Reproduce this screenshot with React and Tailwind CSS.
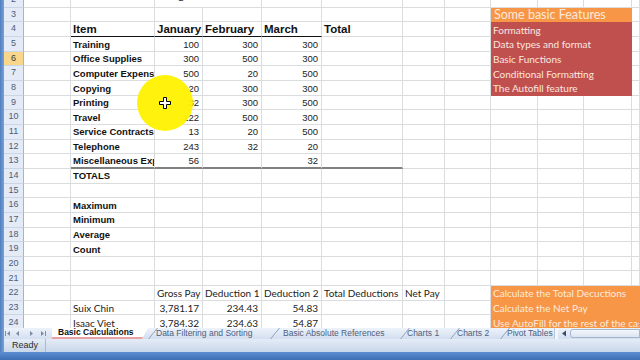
import React from 'react';

// column template: row header, then A..L
const COLS = 'grid grid-cols-[20px_47px_84px_48px_59px_60px_81px_42px_46px_47px_46px_48px_1fr] h-[14.67px]';
const SPAN = { 1: '', 2: 'col-span-2', 3: 'col-span-3', 4: 'col-span-4' };

const KIND = {
  item: 'font-bold text-[9.5px] pl-[2px] text-[#111]',
  head: 'font-bold text-[11.5px] pl-[2px] text-[#111]',
  num: 'justify-end text-[9.5px] pr-[3px] text-[#222]',
  cal: '[font-family:Lato,sans-serif] text-[10px] pl-[2px] text-[#222]',
  calnum: '[font-family:Lato,sans-serif] justify-end text-[10px] pr-[3px] text-[#222]',
  title: '[font-family:Lato,sans-serif] text-[11px] pl-[2px] text-[#222] !items-start',
  featHead: '[font-family:Lato,sans-serif] text-[12.5px] pl-[3px] bg-[#f79646] text-[#fde9d9]',
  feat: '[font-family:Lato,sans-serif] text-[10px] pl-[2px] bg-[#c0504d] text-[#fbe6e0]',
  task: '[font-family:Lato,sans-serif] text-[10px] pl-[2px] bg-[#f79646] text-[#fdeadb]',
};

const FILL_BORDER = {
  featHead: 'border-r-[#f79646] border-b-[#f79646]',
  feat: 'border-r-[#c0504d] border-b-[#c0504d]',
  task: 'border-r-[#f79646] border-b-[#f79646]',
};

const it = (t) => ({ t, kind: 'item' });
const n = (t) => ({ t, kind: 'num' });
const feat = (t) => ({ t, kind: 'feat', span: 3 });
const task = (t) => ({ t, kind: 'task', span: 4 });

// each row: [rowNumber, cells keyed by column index (0 = A)]
const rows = [
  [2, { 2: { t: 'Using Excel', kind: 'title', span: 2 } }],
  [3, { 8: { t: 'Some basic Features', kind: 'featHead', span: 3 } }],
  [4, {
    1: { t: 'Item', kind: 'head', bb: 'black' },
    2: { t: 'January', kind: 'head', bb: 'black' },
    3: { t: 'February', kind: 'head', bb: 'black' },
    4: { t: 'March', kind: 'head', bb: 'black' },
    5: { t: 'Total', kind: 'head' },
    8: feat('Formatting'),
  }],
  [5, { 1: it('Training'), 2: n(100), 3: n(300), 4: n(300), 8: feat('Data types and format') }],
  [6, { 1: it('Office Supplies'), 2: n(300), 3: n(500), 4: n(300), 8: feat('Basic Functions') }],
  [7, { 1: it('Computer Expenses'), 2: n(500), 3: n(20), 4: n(500), 8: feat('Conditional Formatting') }],
  [8, { 1: it('Copying'), 2: n(20), 3: n(300), 4: n(300), 8: feat('The Autofill feature') }],
  [9, { 1: it('Printing'), 2: n(32), 3: n(300), 4: n(500) }],
  [10, { 1: it('Travel'), 2: n(122), 3: n(500), 4: n(300) }],
  [11, { 1: it('Service Contracts'), 2: n(13), 3: n(20), 4: n(500) }],
  [12, { 1: it('Telephone'), 2: n(243), 3: n(32), 4: n(20) }],
  [13, {
    1: { ...it('Miscellaneous Expenses'), bb: 'thick' },
    2: { ...n(56), bb: 'thick' },
    3: { t: '', bb: 'thick' },
    4: { ...n(32), bb: 'thick' },
    5: { t: '', bb: 'thick' },
  }],
  [14, { 1: it('TOTALS') }],
  [15, {}],
  [16, { 1: it('Maximum') }],
  [17, { 1: it('Minimum') }],
  [18, { 1: it('Average') }],
  [19, { 1: it('Count') }],
  [20, {}],
  [21, {}],
  [22, {
    2: { t: 'Gross Pay', kind: 'cal' },
    3: { t: 'Deduction 1', kind: 'cal' },
    4: { t: 'Deduction 2', kind: 'cal' },
    5: { t: 'Total Deductions', kind: 'cal' },
    6: { t: 'Net Pay', kind: 'cal' },
    8: task('Calculate the Total Decuctions'),
  }],
  [23, {
    1: { t: 'Suix Chin', kind: 'cal' },
    2: { t: '3,781.17', kind: 'calnum' },
    3: { t: '234.43', kind: 'calnum' },
    4: { t: '54.83', kind: 'calnum' },
    8: task('Calculate the Net Pay'),
  }],
  [24, {
    1: { t: 'Isaac Viet', kind: 'cal' },
    2: { t: '3,784.32', kind: 'calnum' },
    3: { t: '234.63', kind: 'calnum' },
    4: { t: '54.87', kind: 'calnum' },
    8: task('Use AutoFill for the rest of the cases'),
  }],
];

function Cell({ cell }) {
  const { t = '', kind, span = 1, bb } = cell;
  let border = 'border-r border-b border-r-[#dadcdd] border-b-[#dadcdd]';
  if (FILL_BORDER[kind]) border = `border-r border-b ${FILL_BORDER[kind]}`;
  if (bb === 'black') border = 'border-r border-b border-r-[#dadcdd] border-b-[#111]';
  if (bb === 'thick') border = 'border-r border-b-2 border-r-[#dadcdd] border-b-[#808080]';
  return (
    <div
      className={`${SPAN[span]} min-w-0 h-full overflow-hidden whitespace-nowrap flex items-center leading-none pt-[1px] ${border} ${kind ? KIND[kind] : ''}`}
    >
      {kind === 'title' ? <span className="-mt-[5px]">{t}</span> : t}
    </div>
  );
}

function SheetRow({ num, cells }) {
  const out = [];
  for (let c = 0; c < 12; c++) {
    const cell = cells[c];
    if (cell) {
      out.push(<Cell key={c} cell={cell} />);
      c += (cell.span || 1) - 1;
    } else {
      out.push(<Cell key={c} cell={{}} />);
    }
  }
  return (
    <div className={COLS}>
      <div
        className={`h-full flex items-center justify-center text-[9px] border-r border-b border-r-[#9eb6ce] border-b-[#c9d6e6] ${
          num === 6 ? 'bg-[#f8d68a] text-[#3a3a3a]' : 'bg-[#e4ebf6] text-[#4a5d7a]'
        }`}
      >
        {num}
      </div>
      {out}
    </div>
  );
}

function Tab({ label, w, pad }) {
  return (
    <div className={`relative flex items-center shrink-0 ${w} ${pad} text-[#4b5f7e] overflow-hidden whitespace-nowrap`}>
      <svg className="absolute left-0 top-0" width="10" height="11" viewBox="0 0 10 11">
        <line x1="0.5" y1="11" x2="9.5" y2="0" stroke="#8ea3c0" strokeWidth="1" />
      </svg>
      {label}
    </div>
  );
}

export default function App() {
  return (
    <div className="w-[640px] h-[360px] overflow-hidden flex flex-col bg-white [font-family:Liberation_Sans,Arial,sans-serif]">
      <div className="flex h-[352px]">
        <div className="w-[4px] bg-gradient-to-r from-[#4f7fc0] to-[#7aa0d4]" />
        <div className="flex-1 flex flex-col min-w-0">
          {/* sheet */}
          <div className="relative h-[328px] overflow-hidden">
            <div className="-mt-[7px]">
              {rows.map(([num, cells]) => (
                <SheetRow key={num} num={num} cells={cells} />
              ))}
            </div>
            {/* highlight + cursor (sheet area starts at x = 4) */}
            <div className="absolute left-[133px] top-[75px] w-[56px] h-[56px] rounded-full bg-[#fff200] opacity-95 translate-x-[0px]" />
            <svg className="absolute left-[155px] top-[97px]" width="12" height="12" viewBox="0 0 12 12">
              <path d="M4.5 0.5H7.5V4.5H11.5V7.5H7.5V11.5H4.5V7.5H0.5V4.5H4.5Z" fill="#fff" stroke="#000" strokeWidth="1" />
            </svg>
          </div>

          {/* sheet tabs */}
          <div className="flex h-[11px] items-stretch bg-gradient-to-b from-[#eef3fa] to-[#d2deef] text-[8.5px] leading-none">
            <div className="w-[48px] shrink-0 flex items-center">
              <svg width="48" height="11" viewBox="0 0 48 11">
                <g fill="#7b8ba3">
                  <rect x="1" y="3" width="1" height="5" />
                  <path d="M6 3V8L3 5.5Z" />
                  <path d="M15 3V8L12 5.5Z" />
                  <path d="M26 3V8L29 5.5Z" />
                  <path d="M37 3V8L40 5.5Z" />
                  <rect x="41" y="3" width="1" height="5" />
                </g>
              </svg>
            </div>
            <div className="w-[96px] shrink-0 flex items-center pl-[6px] bg-white border-b-2 border-b-[#e9a0a0] font-bold text-[#111] [clip-path:polygon(0_0,100%_0,calc(100%-6px)_100%,0_100%)]">
              Basic Calculations
            </div>
            <Tab label="Data Filtering and Sorting" w="w-[122px]" pad="pl-[8px]" />
            <Tab label="Basic Absolute References" w="w-[130px]" pad="pl-[13px]" />
            <Tab label="Charts 1" w="w-[50px]" pad="pl-[7px]" />
            <Tab label="Charts 2" w="w-[50px]" pad="pl-[7px]" />
            <Tab label="Pivot Tables" w="w-[54px]" pad="pl-[7px]" />
            <div className="w-[4px] shrink-0 bg-[#f2f5fa] border-l border-[#b7c6da]" />
            <div className="w-[12px] shrink-0 flex items-center justify-center">
              <svg width="6" height="7" viewBox="0 0 6 7">
                <path d="M5 0.5V6.5L1 3.5Z" fill="#3b4d68" />
              </svg>
            </div>
            <div className="flex-1 my-[1px] rounded-l-[3px] border border-[#a3b6cf] bg-gradient-to-b from-[#f4f7fb] to-[#dbe4f0]" />
          </div>

          {/* status bar */}
          <div className="h-[13px] flex items-center bg-gradient-to-b from-[#e4ecf7] to-[#c9d7ea] text-[9px] text-[#2c2c2c]">
            <div className="pl-[8px] pr-[7px] h-full flex items-center border-r border-[#a9bad1]">Ready</div>
          </div>
        </div>
      </div>
      <div className="h-[8px] bg-gradient-to-b from-[#5c8dd0] to-[#3e6fb5]" />
    </div>
  );
}
